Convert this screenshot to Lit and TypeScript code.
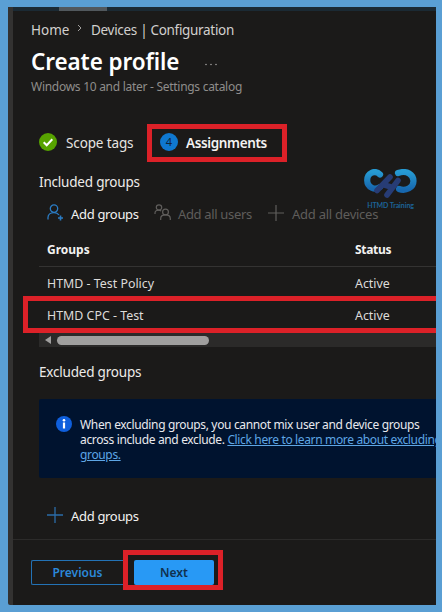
import { LitElement, html, css, svg } from "lit";
import { customElement } from "lit/decorators.js";

const person = svg`<circle cx="7" cy="4.6" r="3.7"/><path d="M1 15.5V13.6C1 10.8 3.4 8.6 7 8.6c2.200 0 3.900.8 5 2.400"/>`;

@customElement("app-root")
export class AppRoot extends LitElement {
  static styles = css`
    :host { display: block; width: 442px; height: 612px; font-family: "Noto Sans", "Open Sans", sans-serif; }
    * { box-sizing: border-box; }
    svg { display: block; flex: none; }
    .backdrop { width: 442px; height: 612px; padding: 7px 6px 7px 8px; background: #5a9fd4; overflow: hidden; }
    .window { height: 598px; background: #1b1a19; border-left: 5px solid #333231; border-bottom-left-radius: 2px; overflow: hidden; white-space: nowrap; color: #e6e4e2; display: flex; flex-direction: column; }
    .topbar { height: 4px; flex: none; background: #1b2a34; padding-left: 46px; }
    .tab { width: 48px; height: 4px; background: #51585d; }
    .crumbs { display: flex; align-items: center; height: 20px; margin: 9px 0 0 18px; font-size: 13.5px; color: #d2d0ce; }
    .home { width: 46px; }
    .crumbs svg { margin: -5px 9px 0 0; }
    .crumbs .path { letter-spacing: -0.31px; }
    .heading { display: flex; align-items: center; height: 34px; margin: 5px 0 0 18px; }
    .heading svg { margin-top: 4px; }
    h1 { margin: 0; width: 174px; font-size: 22.5px; font-weight: 600; color: #fff; line-height: 34px; letter-spacing: -0.1px; }
    .sub { margin: 0 0 0 18px; height: 16px; line-height: 16px; font-size: 12px; letter-spacing: -0.28px; color: #8f8d8b; }
    .steps { display: flex; align-items: center; height: 38px; margin: 29px 0 0 26px; font-size: 13.5px; }
    .done { margin-right: 9px; margin-top: -2px; }
    .scope { width: 81px; letter-spacing: -0.13px; }
    .current { width: 140px; height: 38px; border: 5px solid #dc2128; display: flex; align-items: center; padding-left: 8px; font-weight: 600; color: #f3f2f1; }
    .num { width: 18px; height: 18px; border-radius: 50%; background: #0f78d0; color: #10243a; font-size: 11px; line-height: 18px; text-align: center; margin: -2px 8px 0 0; font-weight: 400; }
    .assign { letter-spacing: -0.36px; }
    .section { margin-left: 26px; height: 20px; line-height: 20px; font-size: 13.5px; letter-spacing: -0.2px; color: #edebe9; }
    .included { margin-top: 10px; }
    .tools { position: relative; display: flex; align-items: center; height: 24px; margin: 10px 0 0 34px; font-size: 13px; letter-spacing: -0.32px; color: #f3f2f1; }
    .tools svg { margin-right: 7px; }
    .tools .t1 svg { margin-top: -3px; }
    .tools .t2 svg { margin-right: 6px; margin-top: -3px; }
    .tools .t3 svg { margin-right: 8px; margin-top: -3px; }
    .tool { display: flex; align-items: center; }
    .off { color: #5f5d5b; letter-spacing: -0.34px; }
    .t3 { letter-spacing: -0.25px; }
    .t1 { width: 107px; } .t2 { width: 114px; }
    .logo { position: absolute; left: 317px; top: -33px; width: 53px; }
    .logo .mark { margin: 0; }
    .brand { font-family: Lato, sans-serif; font-size: 7px; line-height: 8px; color: #1c6296; font-weight: 700; text-align: center; letter-spacing: -0.08px; }
    .row { display: grid; grid-template-columns: 308px 1fr; align-items: center; margin-left: 26px; padding-left: 8px; font-size: 12.4px; color: #dddbd9; }
    .head { height: 41px; padding-top: 6px; border-bottom: 1px solid #343332; font-size: 12px; font-weight: 700; color: #f3f2f1; }
    .head .status { letter-spacing: -0.3px; }
    .r1 { height: 29px; padding-top: 4px; }
    .marked { height: 37px; margin-left: 10px; padding: 2px 0 0 19px; border: 5px solid #dc2128; border-right: 0; }
    .scroll { height: 14px; margin-left: 26px; background: #2b2a29; display: flex; align-items: center; padding-left: 6px; }
    .thumb { width: 152px; height: 9px; border-radius: 5px; background: #a09f9e; margin-left: 6px; }
    .excluded { margin-top: 15px; }
    .info { height: 79px; margin: 17px 0 0 26px; background: #00132f; display: flex; padding: 18px 0 0 17px; font-size: 12px; line-height: 15px; letter-spacing: -0.35px; color: #e8e9ee; border-radius: 2px 0 0 2px; }
    .info svg { margin-right: 8px; margin-top: -1px; }
    .info a { color: #5ea6e5; text-decoration: underline; }
    .more { margin: 26px 0 0 34px; height: 24px; display: flex; align-items: center; font-size: 13px; letter-spacing: -0.32px; color: #f3f2f1; }
    .more svg { margin: -2px 8px 0 0; }
    .footer { margin-top: 11px; height: 66px; border-top: 1px solid #2c2b2a; display: flex; padding-left: 18px; }
    .btn { font-size: 12px; font-weight: 600; display: flex; align-items: center; justify-content: center; border-radius: 2px; }
    .prev { width: 92px; height: 25px; margin-top: 20px; border: 1px solid #2372b5; color: #2b88d8; border-radius: 2px 0 0 2px; border-right: 0; }
    .ring { width: 100px; height: 40px; margin-top: 10px; border: 5px solid #dc2128; padding: 5px 4px 0 6px; }
    .next { height: 25px; background: #2899f5; color: #10304e; }
  `;

  render() {
    return html`
      <div class="backdrop"><div class="window">
        <div class="topbar"><div class="tab"></div></div>
        <div class="crumbs">
          <span class="home">Home</span>
          <svg width="5" height="8" fill="none" stroke="#a19f9d"><path d="M1 1l3 3-3 3"/></svg>
          <span class="path">Devices | Configuration</span>
        </div>
        <div class="heading"><h1>Create profile</h1>
          <svg width="12" height="3" fill="#a19f9d"><circle cx="1" cy="1.5" r=".8"/><circle cx="6" cy="1.5" r=".8"/><circle cx="11" cy="1.5" r=".8"/></svg>
        </div>
        <div class="sub">Windows 10 and later - Settings catalog</div>
        <div class="steps">
          <svg class="done" width="18" height="18"><circle cx="9" cy="9" r="9" fill="#57a300"/><path d="M4.700 9.300l3 3 5.600-6" fill="none" stroke="#fff" stroke-width="2"/></svg>
          <span class="scope">Scope tags</span>
          <div class="current"><span class="num">4</span><span class="assign">Assignments</span></div>
        </div>
        <div class="section included">Included groups</div>
        <div class="tools">
          <div class="tool t1"><svg width="17" height="17" fill="none" stroke="#2b7cc4" stroke-width="1.300">${person}<path d="M13.500 11.500v5M11 14h5" stroke-width="1.600"/></svg><span>Add groups</span></div>
          <div class="tool off t2"><svg width="18" height="17" fill="none" stroke="#605e5c" stroke-width="1.200"><circle cx="5" cy="3.500" r="2.700"/><path d="M1 10V9c0-1.700 1.500-2.800 3.500-2.800 1.200 0 2 .3 2.700.9"/><circle cx="11.500" cy="8" r="2.900"/><path d="M6.700 16v-1.500c0-2.200 2-3.600 4.800-3.600s4.800 1.400 4.800 3.600V16"/></svg><span>Add all users</span></div>
          <div class="tool off t3"><svg width="16" height="16" stroke="#605e5c" stroke-width="1.200"><path d="M8 0v16M0 8h16"/></svg><span>Add all devices</span></div>
          <div class="logo">
            <svg class="mark" width="53" height="32" fill="none" stroke-linecap="round">
              <defs><linearGradient id="cy" x1="0" y1="0" x2="0" y2="1"><stop stop-color="#269ad2"/><stop offset="1" stop-color="#1767ae"/></linearGradient></defs>
              <path d="M16 5.500C11 .5 3.200 4 3.200 11.300S11 21.500 16 18" stroke="url(#cy)" stroke-width="6.200"/>
              <path d="M34 4C43 1 49.500 5.500 49.500 12S42 22.500 35 20" stroke="url(#cy)" stroke-width="6.200"/>
              <path d="M26 8L13 21.500M34 11.500L23 26M20.500 16L27 18" stroke="#273c75" stroke-width="5.600"/>
            </svg>
            <div class="brand">HTMD Training</div>
          </div>
        </div>
        <div class="row head"><span>Groups</span><span class="status">Status</span></div>
        <div class="row r1"><span>HTMD - Test Policy</span><span>Active</span></div>
        <div class="row marked"><span>HTMD CPC - Test</span><span>Active</span></div>
        <div class="scroll"><svg width="6" height="8" fill="#a09f9e"><path d="M6 0v8L0 4z"/></svg><div class="thumb"></div></div>
        <div class="section excluded">Excluded groups</div>
        <div class="info">
          <svg width="16" height="16"><circle cx="8" cy="8" r="8" fill="#0f5fdc"/><circle cx="8" cy="4.300" r="1.300" fill="#fff"/><path d="M8 6.500v6" stroke="#fff" stroke-width="2.200" fill="none"/></svg>
          <div>When excluding groups, you cannot mix user and device groups<br>across include and exclude. <a>Click here to learn more about excluding<br>groups.</a></div>
        </div>
        <div class="more"><svg width="16" height="16" stroke="#2b6ca8" stroke-width="1.300"><path d="M8 0v16M0 8h16"/></svg><span>Add groups</span></div>
        <div class="footer"><div class="btn prev">Previous</div><div class="ring"><div class="btn next">Next</div></div></div>
      </div></div>`;
  }
}
